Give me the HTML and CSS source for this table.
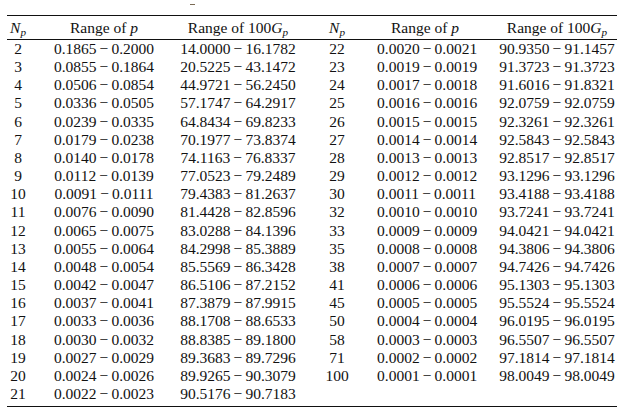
FILE: index.html
```html
<!DOCTYPE html>
<html>
<head>
<meta charset="utf-8">
<link rel="stylesheet" href="styles.css">
</head>
<body>
<div class="top"><span class="speck"></span></div>
<div class="frame">
<table class="tbl">
<colgroup>
<col class="c1"><col class="c2"><col class="c3"><col class="c4"><col class="c5"><col class="c6">
</colgroup>
<thead>
<tr>
<th><i>N</i><sub><i>p</i></sub></th>
<th>Range of <i>p</i></th>
<th>Range of 100<i>G</i><sub><i>p</i></sub></th>
<th><i>N</i><sub><i>p</i></sub></th>
<th>Range of <i>p</i></th>
<th class="r6">Range of 100<i>G</i><sub><i>p</i></sub></th>
</tr>
</thead>
<tbody>
<tr><td>2</td><td>0.1865&#8201;−&#8201;0.2000</td><td>14.0000&#8201;−&#8201;16.1782</td><td>22</td><td>0.0020&#8201;−&#8201;0.0021</td><td class="r6">90.9350&#8201;−&#8201;91.1457</td></tr>
<tr><td>3</td><td>0.0855&#8201;−&#8201;0.1864</td><td>20.5225&#8201;−&#8201;43.1472</td><td>23</td><td>0.0019&#8201;−&#8201;0.0019</td><td class="r6">91.3723&#8201;−&#8201;91.3723</td></tr>
<tr><td>4</td><td>0.0506&#8201;−&#8201;0.0854</td><td>44.9721&#8201;−&#8201;56.2450</td><td>24</td><td>0.0017&#8201;−&#8201;0.0018</td><td class="r6">91.6016&#8201;−&#8201;91.8321</td></tr>
<tr><td>5</td><td>0.0336&#8201;−&#8201;0.0505</td><td>57.1747&#8201;−&#8201;64.2917</td><td>25</td><td>0.0016&#8201;−&#8201;0.0016</td><td class="r6">92.0759&#8201;−&#8201;92.0759</td></tr>
<tr><td>6</td><td>0.0239&#8201;−&#8201;0.0335</td><td>64.8434&#8201;−&#8201;69.8233</td><td>26</td><td>0.0015&#8201;−&#8201;0.0015</td><td class="r6">92.3261&#8201;−&#8201;92.3261</td></tr>
<tr><td>7</td><td>0.0179&#8201;−&#8201;0.0238</td><td>70.1977&#8201;−&#8201;73.8374</td><td>27</td><td>0.0014&#8201;−&#8201;0.0014</td><td class="r6">92.5843&#8201;−&#8201;92.5843</td></tr>
<tr><td>8</td><td>0.0140&#8201;−&#8201;0.0178</td><td>74.1163&#8201;−&#8201;76.8337</td><td>28</td><td>0.0013&#8201;−&#8201;0.0013</td><td class="r6">92.8517&#8201;−&#8201;92.8517</td></tr>
<tr><td>9</td><td>0.0112&#8201;−&#8201;0.0139</td><td>77.0523&#8201;−&#8201;79.2489</td><td>29</td><td>0.0012&#8201;−&#8201;0.0012</td><td class="r6">93.1296&#8201;−&#8201;93.1296</td></tr>
<tr><td>10</td><td>0.0091&#8201;−&#8201;0.0111</td><td>79.4383&#8201;−&#8201;81.2637</td><td>30</td><td>0.0011&#8201;−&#8201;0.0011</td><td class="r6">93.4188&#8201;−&#8201;93.4188</td></tr>
<tr><td>11</td><td>0.0076&#8201;−&#8201;0.0090</td><td>81.4428&#8201;−&#8201;82.8596</td><td>32</td><td>0.0010&#8201;−&#8201;0.0010</td><td class="r6">93.7241&#8201;−&#8201;93.7241</td></tr>
<tr><td>12</td><td>0.0065&#8201;−&#8201;0.0075</td><td>83.0288&#8201;−&#8201;84.1396</td><td>33</td><td>0.0009&#8201;−&#8201;0.0009</td><td class="r6">94.0421&#8201;−&#8201;94.0421</td></tr>
<tr><td>13</td><td>0.0055&#8201;−&#8201;0.0064</td><td>84.2998&#8201;−&#8201;85.3889</td><td>35</td><td>0.0008&#8201;−&#8201;0.0008</td><td class="r6">94.3806&#8201;−&#8201;94.3806</td></tr>
<tr><td>14</td><td>0.0048&#8201;−&#8201;0.0054</td><td>85.5569&#8201;−&#8201;86.3428</td><td>38</td><td>0.0007&#8201;−&#8201;0.0007</td><td class="r6">94.7426&#8201;−&#8201;94.7426</td></tr>
<tr><td>15</td><td>0.0042&#8201;−&#8201;0.0047</td><td>86.5106&#8201;−&#8201;87.2152</td><td>41</td><td>0.0006&#8201;−&#8201;0.0006</td><td class="r6">95.1303&#8201;−&#8201;95.1303</td></tr>
<tr><td>16</td><td>0.0037&#8201;−&#8201;0.0041</td><td>87.3879&#8201;−&#8201;87.9915</td><td>45</td><td>0.0005&#8201;−&#8201;0.0005</td><td class="r6">95.5524&#8201;−&#8201;95.5524</td></tr>
<tr><td>17</td><td>0.0033&#8201;−&#8201;0.0036</td><td>88.1708&#8201;−&#8201;88.6533</td><td>50</td><td>0.0004&#8201;−&#8201;0.0004</td><td class="r6">96.0195&#8201;−&#8201;96.0195</td></tr>
<tr><td>18</td><td>0.0030&#8201;−&#8201;0.0032</td><td>88.8385&#8201;−&#8201;89.1800</td><td>58</td><td>0.0003&#8201;−&#8201;0.0003</td><td class="r6">96.5507&#8201;−&#8201;96.5507</td></tr>
<tr><td>19</td><td>0.0027&#8201;−&#8201;0.0029</td><td>89.3683&#8201;−&#8201;89.7296</td><td>71</td><td>0.0002&#8201;−&#8201;0.0002</td><td class="r6">97.1814&#8201;−&#8201;97.1814</td></tr>
<tr><td>20</td><td>0.0024&#8201;−&#8201;0.0026</td><td>89.9265&#8201;−&#8201;90.3079</td><td>100</td><td>0.0001&#8201;−&#8201;0.0001</td><td class="r6">98.0049&#8201;−&#8201;98.0049</td></tr>
<tr><td>21</td><td>0.0022&#8201;−&#8201;0.0023</td><td>90.5176&#8201;−&#8201;90.7183</td><td></td><td></td><td class="r6"></td></tr>
</tbody>
</table>
</div>
</body>
</html>
```

FILE: styles.css
```css
html, body {
  margin: 0;
  padding: 0;
  background: #fff;
}
body {
  font-family: "Liberation Serif", "Times New Roman", serif;
  color: #111;
  font-size: 15.5px;
}
.top {
  height: 15px;
  padding-left: 190px;
  box-sizing: border-box;
  padding-top: 4px;
}
.speck {
  display: block;
  width: 5px;
  height: 1px;
  background: #7a6a55;
}
.frame {
  margin-left: 7px;
  width: 610px;
  border-top: 1px solid #111;
  border-bottom: 1px solid #111;
  padding-bottom: 3px;
}
.tbl {
  width: 610px;
  border-collapse: collapse;
  table-layout: fixed;
}
.c1 { width: 22px; }
.c2 { width: 150px; }
.c3 { width: 118px; }
.c4 { width: 80px; }
.c5 { width: 96px; }
.c6 { width: 144px; }
.tbl th {
  font-weight: normal;
  height: 22px;
  padding: 0;
  padding-top: 1px;
  text-align: center;
  border-bottom: 1px solid #111;
  line-height: 22px;
}
.tbl td {
  padding: 0;
  height: 18.15px;
  line-height: 18.15px;
  text-align: center;
  white-space: nowrap;
}
.tbl .r6 {
  padding-left: 24px;
}
sub {
  font-size: 0.72em;
  vertical-align: -0.25em;
  line-height: 0;
}
```
